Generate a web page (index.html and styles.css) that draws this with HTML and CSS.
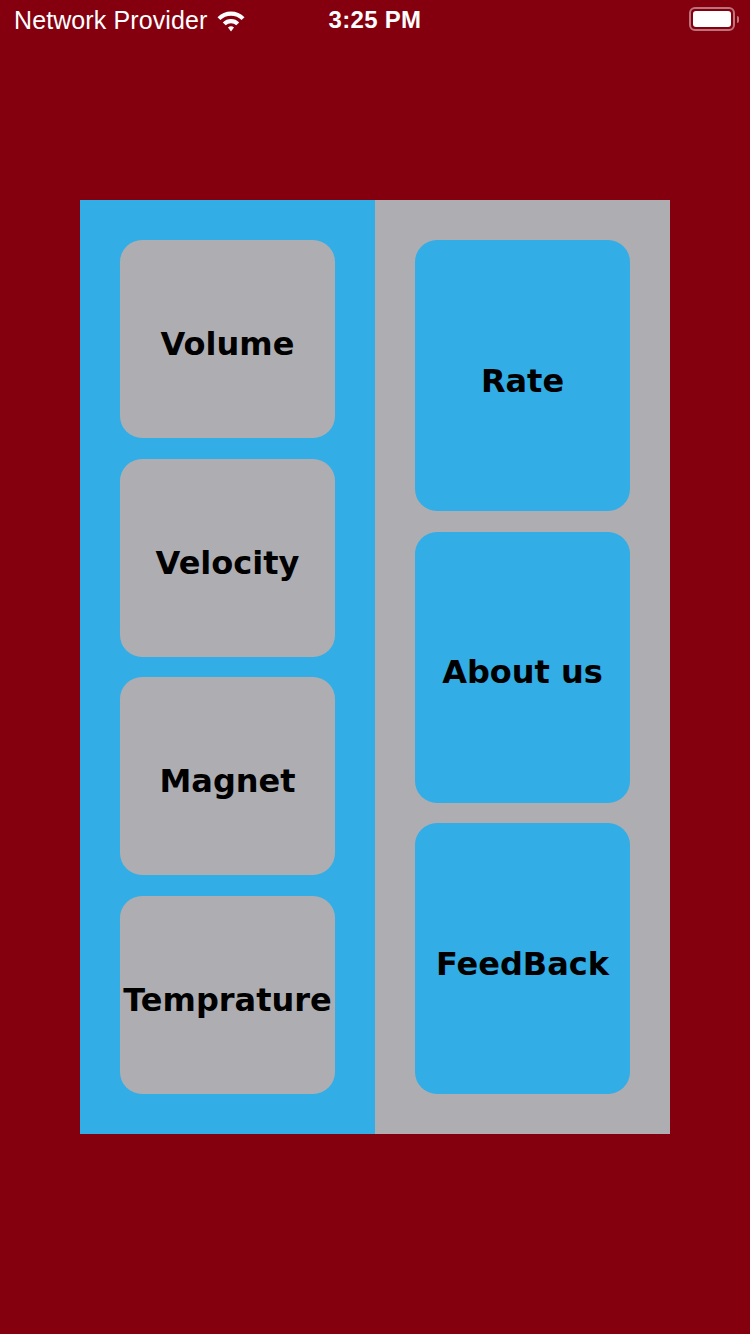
FILE: index.html
```html
<!DOCTYPE html>
<html>
<head>
<meta charset="utf-8">
<link rel="stylesheet" href="styles.css">
</head>
<body>
<div class="status">
  <div class="left">
    <span class="carrier">Network Provider</span>
    <svg class="wifi" width="30" height="24" viewBox="0 0 30 24">
      <path d="M1.5 8.2 A19 19 0 0 1 28.5 8.2 L25.6 11.1 A15 15 0 0 0 4.4 11.1 Z" fill="#fff"/>
      <path d="M6.8 13.4 A11.6 11.6 0 0 1 23.2 13.4 L20.3 16.3 A7.6 7.6 0 0 0 9.7 16.3 Z" fill="#fff"/>
      <path d="M12 18.6 A4.3 4.3 0 0 1 18 18.6 L15 22.5 Z" fill="#fff"/>
    </svg>
  </div>
  <div class="time">3:25 PM</div>
  <div class="right">
    <div class="battery"><div class="level"></div></div>
    <div class="nub"></div>
  </div>
</div>
<div class="main">
  <div class="panel">
    <div class="col col-left">
      <div class="btn btn-grey">Volume</div>
      <div class="btn btn-grey">Velocity</div>
      <div class="btn btn-grey">Magnet</div>
      <div class="btn btn-grey">Temprature</div>
    </div>
    <div class="col col-right">
      <div class="btn btn-blue">Rate</div>
      <div class="btn btn-blue">About us</div>
      <div class="btn btn-blue">FeedBack</div>
    </div>
  </div>
</div>
</body>
</html>
```
FILE: styles.css
```css
html, body {
  margin: 0;
  padding: 0;
}
body {
  background: #85000f;
  width: 750px;
  height: 1334px;
  overflow: hidden;
}
.status {
  height: 40px;
  display: flex;
  align-items: center;
  justify-content: space-between;
  color: #fff;
  font-family: "Liberation Sans", Arial, sans-serif;
  position: relative;
}
.left {
  display: flex;
  align-items: center;
  padding-left: 14px;
}
.carrier {
  font-size: 25px;
  letter-spacing: 0.1px;
}
.wifi {
  margin-left: 9px;
  margin-top: 1px;
}
.time {
  position: absolute;
  left: 0;
  right: 0;
  text-align: center;
  font-size: 24px;
  font-weight: bold;
  letter-spacing: 0.3px;
}
.right {
  display: flex;
  align-items: center;
  padding-right: 11px;
}
.battery {
  width: 38px;
  height: 16px;
  border: 2px solid rgba(255,255,255,0.45);
  border-radius: 6px;
  padding: 2px;
  box-sizing: content-box;
  margin-top: -2px;
}
.level {
  width: 100%;
  height: 100%;
  background: #fff;
  border-radius: 3px;
}
.nub {
  width: 2px;
  height: 7px;
  background: rgba(255,255,255,0.45);
  border-radius: 0 2px 2px 0;
  margin-left: 2px;
  margin-top: -2px;
}
.main {
  padding: 160px 80px 0;
}
.panel {
  display: flex;
  height: 934px;
}
.col {
  flex: 1;
  display: flex;
  flex-direction: column;
  gap: 20.5px;
  padding: 40px;
}
.col-left {
  background: #32ade6;
}
.col-right {
  background: #aeaeb2;
}
.btn {
  flex: 1;
  border-radius: 22px;
  display: flex;
  align-items: center;
  justify-content: center;
  font-family: "DejaVu Sans", sans-serif;
  font-weight: bold;
  font-size: 32px;
  color: #000;
  padding-top: 10px;
  white-space: nowrap;
}
.btn-grey {
  background: #aeaeb2;
}
.btn-blue {
  background: #32ade6;
}
```
